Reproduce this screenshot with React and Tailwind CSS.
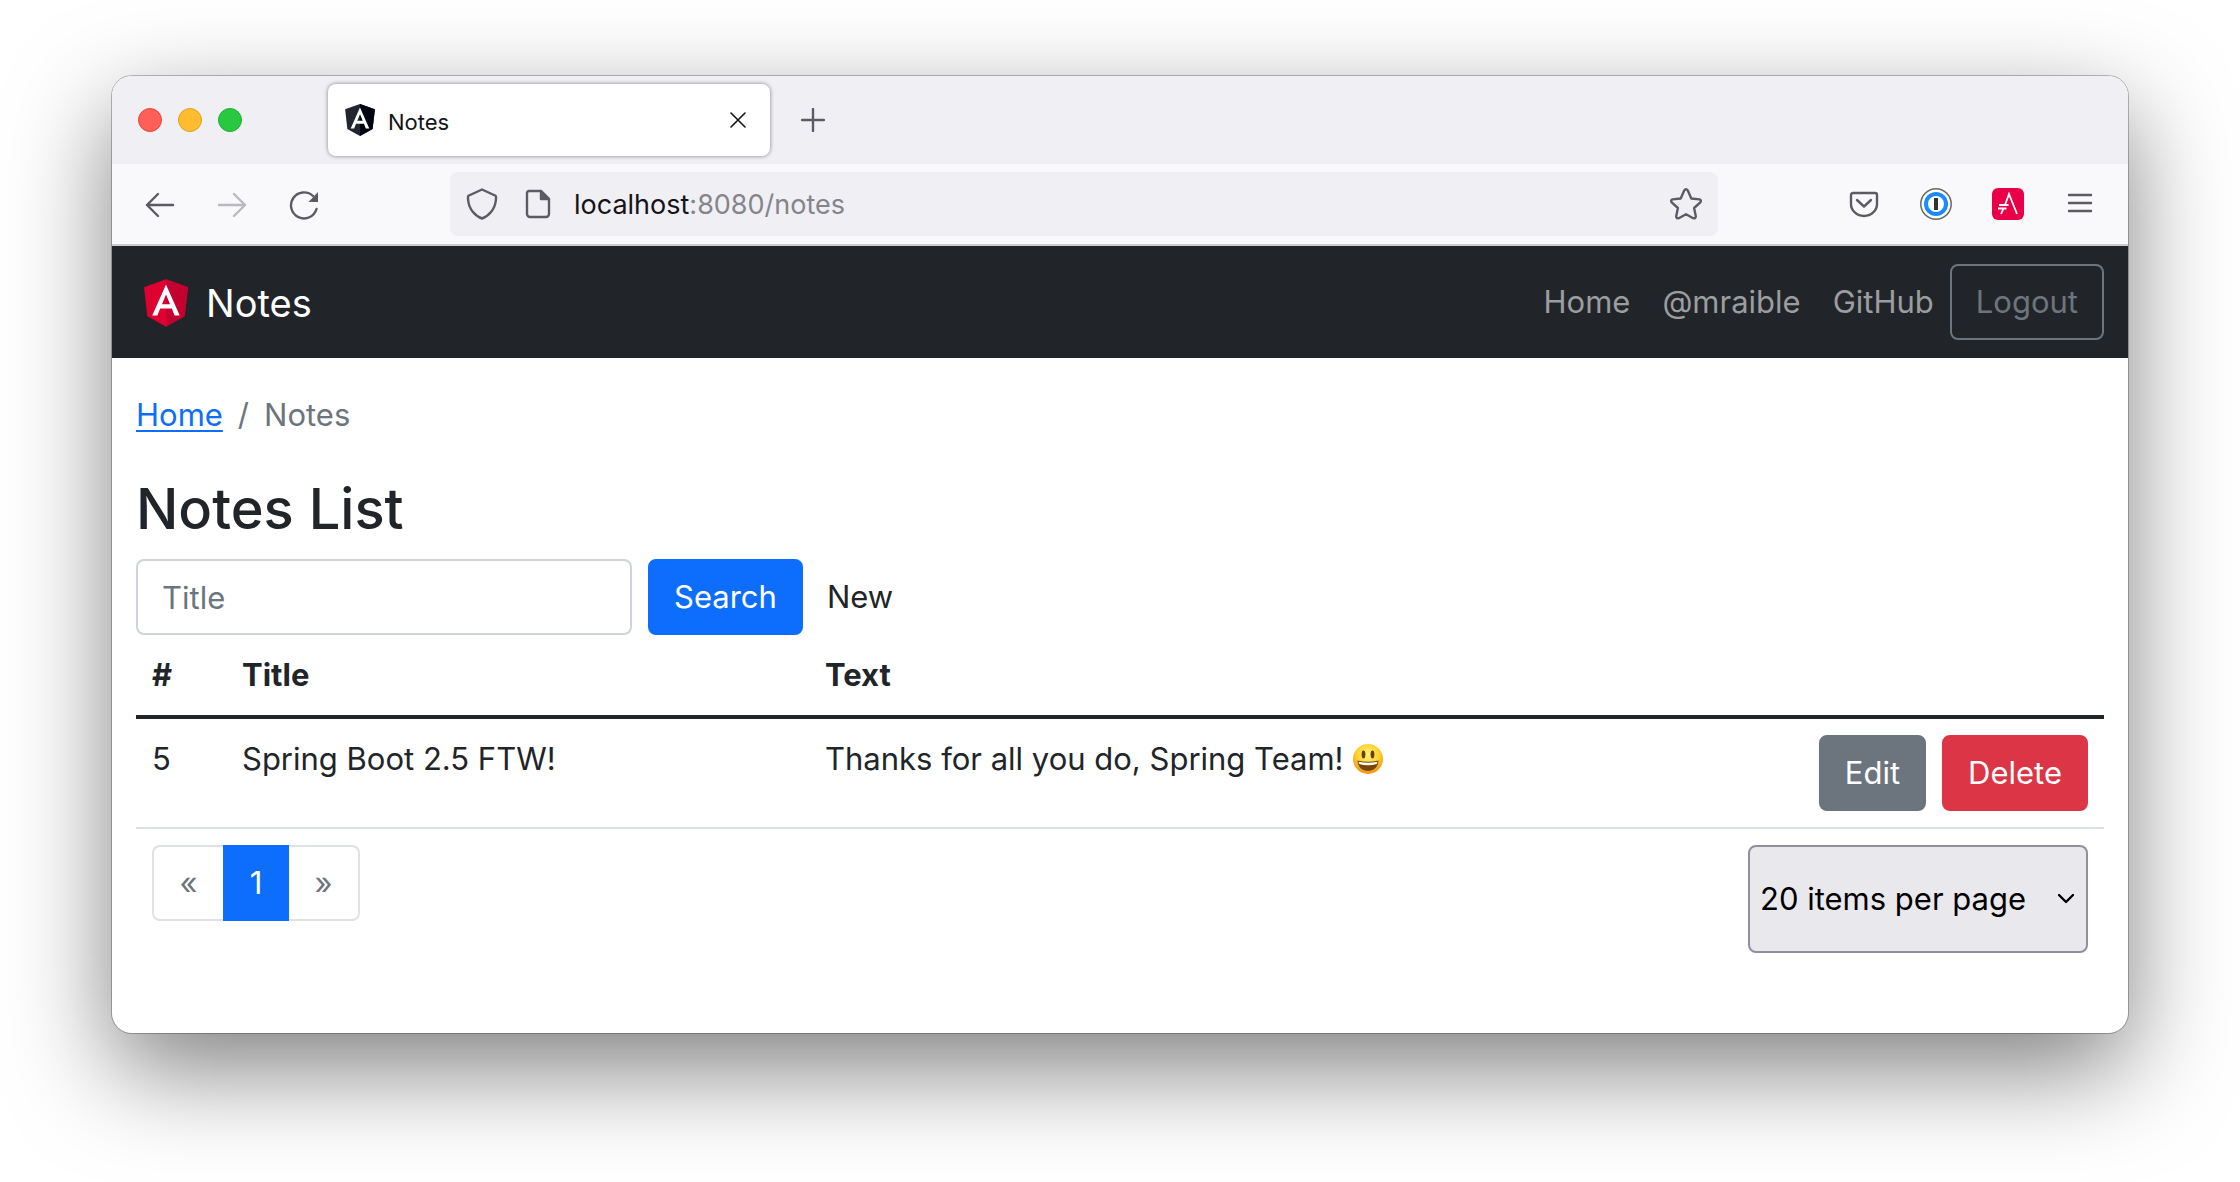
const icon = "fill-none stroke-[#5b5b66] stroke-[2.4]";

function AngularShield({ left, right, className }) {
  return (
    <svg viewBox="31.9 30 186.2 200" className={className} aria-hidden="true">
      <path fill={left} d="M125 30 31.9 63.2l14.2 123.1L125 230l78.9-43.7 14.2-123.1z" />
      <path fill={right} d="M125 30v200l78.9-43.7 14.2-123.1z" />
      <path
        fill="#fff"
        d="M125 52.1 66.8 182.6h21.7l11.7-29.2h49.4l11.7 29.2H183zm17 83.3h-34l17-40.9z"
      />
    </svg>
  );
}

function SmileyIcon() {
  return (
    <svg viewBox="0 0 32 32" className="size-8" role="img" aria-label="smiling face">
      <defs>
        <radialGradient id="face" cx="50%" cy="35%" r="65%">
          <stop offset="0" stopColor="#fff27a" />
          <stop offset="0.6" stopColor="#fdd02e" />
          <stop offset="1" stopColor="#ee8f0f" />
        </radialGradient>
      </defs>
      <circle cx="16" cy="16" r="15" fill="url(#face)" />
      <ellipse cx="11.5" cy="11.5" rx="1.9" ry="4" fill="#6b3f0c" />
      <ellipse cx="20.5" cy="11.5" rx="1.9" ry="4" fill="#6b3f0c" />
      <path d="M5.5 17.5q10.500 2.500 21 0c0 6-4.500 10.500-10.500 10.500S5.500 23.500 5.500 17.500z" fill="#7a4408" />
      <path d="M6.500 18.700q9.500 2 19 0l-.6 2.300q-8.900 2.600-17.800 0z" fill="#fff" />
    </svg>
  );
}

function TabStrip() {
  return (
    <div className="flex h-[88px] items-center bg-[#f0eff4] pl-[26px]">
      <div className="flex gap-4">
        <button aria-label="Close window" className="size-6 rounded-full border border-[#e2463f] bg-[#ff5f57]" />
        <button aria-label="Minimize window" className="size-6 rounded-full border border-[#e0a028] bg-[#febc2e]" />
        <button aria-label="Zoom window" className="size-6 rounded-full border border-[#1fae33] bg-[#28c840]" />
      </div>
      <div className="ml-[86px] flex h-[72px] w-[442px] items-center rounded-lg bg-white pr-6 pl-4 shadow-[0_0_4px_rgba(0,0,0,0.45)]">
        <AngularShield left="#23252f" right="#02050f" className="size-8" />
        <span className="ml-3 flex-1 pt-1 text-[22px] leading-8 text-[#15141a]">Notes</span>
        <button aria-label="Close tab" className="size-4">
          <svg viewBox="0 0 16 16" className="size-4 fill-none stroke-[#15141a] stroke-[1.6]" strokeLinecap="round">
            <path d="M1 1l14 14M15 1 1 15" />
          </svg>
        </button>
      </div>
      <button aria-label="New tab" className="ml-[31px] size-6">
        <svg viewBox="0 0 24 24" className={`size-6 ${icon}`} strokeLinecap="round">
          <path d="M12 1v22M1 12h22" />
        </svg>
      </button>
    </div>
  );
}

function Toolbar() {
  return (
    <div className="flex h-[82px] items-center border-b-2 border-[#cccccf] bg-[#f9f9fb] px-8">
      <div className="flex items-center gap-10">
        <button aria-label="Back" className="size-8">
          <svg viewBox="0 0 32 32" className={`size-8 ${icon}`} strokeLinecap="round" strokeLinejoin="round">
            <path d="M29 17H3M14 6 3 17l11 11" />
          </svg>
        </button>
        <button aria-label="Forward" disabled className="size-8 opacity-40">
          <svg viewBox="0 0 32 32" className={`size-8 ${icon}`} strokeLinecap="round" strokeLinejoin="round">
            <path d="M3 17h26M18 6l11 11-11 11" />
          </svg>
        </button>
        <button aria-label="Reload" className="size-8">
          <svg viewBox="0 0 32 32" className={`size-8 ${icon}`} strokeLinecap="round">
            <path d="M28.500 21A13 13 0 1 1 25 8" />
            <path d="M30 4v10h-9.500z" className="fill-[#5b5b66] stroke-none" />
          </svg>
        </button>
      </div>
      <div className="ml-[130px] flex h-16 max-w-[1268px] flex-1 items-center rounded-lg bg-[#f0eff4] px-4">
        <svg viewBox="0 0 32 32" className={`size-8 ${icon}`} strokeLinejoin="round" aria-hidden="true">
          <path d="M16 1.500 29 7.500c1.500 0 1 3 .8 5C29 21 23 28 16 30.500 9 28 3 21 2.200 12.500 2 10.500 1.500 7.500 3 7.500z" />
        </svg>
        <svg viewBox="0 0 32 32" className={`ml-6 size-8 ${icon}`} strokeLinejoin="round" aria-hidden="true">
          <path d="M7 3h12l8 8v15a3 3 0 0 1-3 3H8a3 3 0 0 1-3-3V5a2 2 0 0 1 2-2z" />
          <path d="M19 3v8h8z" className="fill-[#5b5b66]" />
        </svg>
        <div role="textbox" aria-label="Address" className="ml-5 flex-1 pt-[2px] text-[27px] leading-8 text-[#15141a]">
          localhost<span className="text-[#85848a]">:8080/notes</span>
        </div>
        <button aria-label="Bookmark this page" className="size-8">
          <svg viewBox="0 0 32 32" className={`size-8 ${icon}`} strokeLinejoin="round">
            <path d="M14.200 2.500q1.800-2.500 3.600 0l3.500 8 8.200.9q2.300.8.800 2.900l-6.200 5.700 1.700 8.300q-.2 2.500-2.600 1.900L16 26.200l-7.200 4q-2.400.6-2.600-1.900l1.700-8.300-6.200-5.700q-1.500-2.100.8-2.900l8.200-.9z" />
          </svg>
        </button>
      </div>
      <div className="ml-auto flex items-center gap-10">
        <button aria-label="Save to Pocket" className="size-8">
          <svg viewBox="0 0 32 32" className={`size-8 ${icon}`} strokeLinecap="round" strokeLinejoin="round">
            <path d="M5 5h22a2 2 0 0 1 2 2v9a13 12 0 0 1-26 0V7a2 2 0 0 1 2-2z" />
            <path d="M9 12l7 6.500L23 12" />
          </svg>
        </button>
        <button aria-label="1Password" className="size-8">
          <svg viewBox="0 0 32 32" className="size-8">
            <circle cx="16" cy="16" r="15.200" fill="#fff" stroke="#66665f" strokeWidth="1.500" />
            <circle cx="16" cy="16" r="10" fill="#fff" stroke="#1a8cff" strokeWidth="4" />
            <path d="M14 10h4v12h-4z" fill="#33322e" />
          </svg>
        </button>
        <button aria-label="Angular DevTools" className="size-8">
          <svg viewBox="0 0 32 32" className="size-8">
            <rect width="32" height="32" rx="6" fill="#e90049" />
            <path
              d="M25 26 17 6l-4 11M7 17h9.500M6 20.500h8.500M11.500 20.500 9 26"
              fill="none"
              stroke="#fff"
              strokeWidth="1.800"
            />
          </svg>
        </button>
        <button aria-label="Open menu" className="size-8">
          <svg viewBox="0 0 32 32" className={`size-8 ${icon}`} strokeLinecap="round">
            <path d="M5 7h22M5 15h22M5 23h22" />
          </svg>
        </button>
      </div>
    </div>
  );
}

function Navbar() {
  return (
    <nav className="flex h-[112px] items-center bg-[#212529] pr-6 pl-8">
      <a href="#" className="flex items-center gap-[18px] pt-[2px] text-[38px] leading-[60px] text-white">
        <AngularShield left="#dd0031" right="#c3002f" className="h-12 w-11" />
        Notes
      </a>
      <div className="ml-auto flex items-center text-[31px] leading-[48px] text-[#9b9d9f]">
        <a href="#" className="px-4">Home</a>
        <a href="#" className="px-4">@mraible</a>
        <a href="#" className="px-4">GitHub</a>
        <button className="rounded-lg border-2 border-[#6c757d] px-6 py-3 text-[#6c757d]">Logout</button>
      </div>
    </nav>
  );
}

function NotesPage() {
  return (
    <main className="px-6 pt-[33px] pb-16 text-[31px] leading-[48px] text-[#212529]">
      <nav aria-label="breadcrumb" className="flex gap-[15px] text-[#6c757d]">
        <a href="#" className="text-[#0d6efd] underline decoration-2 underline-offset-4">Home</a>
        <span>/</span>
        <span>Notes</span>
      </nav>
      <h1 className="mt-8 text-[56px] leading-[76px] font-medium">Notes List</h1>
      <form className="mt-3 flex items-center gap-4" onSubmit={(e) => e.preventDefault()}>
        <input
          aria-label="Title"
          placeholder="Title"
          className="h-[76px] w-[496px] rounded-lg border-2 border-[#ced4da] px-6 placeholder:text-[#6c757d]"
        />
        <button className="rounded-lg border-2 border-[#0d6efd] bg-[#0d6efd] px-6 py-3 text-white">Search</button>
        <a href="#" className="px-2 py-3">New</a>
      </form>
      <table className="w-full table-fixed border-collapse text-left">
        <colgroup>
          <col className="w-[90px]" />
          <col className="w-[583px]" />
          <col />
          <col className="w-[320px]" />
        </colgroup>
        <thead>
          <tr className="border-b-4 border-[#212529]">
            <th className="p-4 font-bold">#</th>
            <th className="p-4 font-bold">Title</th>
            <th className="p-4 font-bold">Text</th>
            <th className="p-4" aria-label="Actions" />
          </tr>
        </thead>
        <tbody>
          <tr className="border-b-2 border-[#dee2e6] align-top">
            <td className="p-4">5</td>
            <td className="p-4">Spring Boot 2.5 FTW!</td>
            <td className="p-4">
              <div className="flex items-center gap-2">
                Thanks for all you do, Spring Team! <SmileyIcon />
              </div>
            </td>
            <td className="p-4">
              <div className="flex justify-end gap-4 text-white">
                <button className="rounded-lg border-2 border-[#6c757d] bg-[#6c757d] px-6 py-3">Edit</button>
                <button className="rounded-lg border-2 border-[#dc3545] bg-[#dc3545] px-6 py-3">Delete</button>
              </div>
            </td>
          </tr>
        </tbody>
      </table>
      <div className="flex items-start justify-between p-4">
        <nav aria-label="Pages" className="flex text-[#6c757d]">
          <button aria-label="Previous" className="w-[71px] rounded-l-lg border-2 border-r-0 border-[#dee2e6] py-3">«</button>
          <button aria-current="page" className="w-[66px] border-2 border-[#0d6efd] bg-[#0d6efd] py-3 text-white">1</button>
          <button aria-label="Next" className="w-[71px] rounded-r-lg border-2 border-l-0 border-[#dee2e6] py-3">»</button>
        </nav>
        <div className="relative">
          <select
            aria-label="Items per page"
            className="h-[108px] w-[340px] appearance-none rounded-lg border-2 border-[#8f8f9d] bg-[#e9e9ed] pl-[10px] text-black"
          >
            <option>20 items per page</option>
          </select>
          <svg
            viewBox="0 0 16 10"
            className="pointer-events-none absolute top-[49px] right-[14px] h-[10px] w-4 fill-none stroke-black stroke-[2.4]"
            strokeLinecap="round"
            strokeLinejoin="round"
            aria-hidden="true"
          >
            <path d="M1 1l7 7 7-7" />
          </svg>
        </div>
      </div>
    </main>
  );
}

export default function App() {
  return (
    <div className="min-h-screen bg-white px-28 pt-[76px] pb-[148px] font-['Inter',sans-serif]">
      <div className="overflow-hidden rounded-[20px] bg-white shadow-[0_0_0_1px_rgba(0,0,0,0.25),0_36px_100px_rgba(0,0,0,0.5)]">
        <TabStrip />
        <Toolbar />
        <Navbar />
        <NotesPage />
      </div>
    </div>
  );
}
